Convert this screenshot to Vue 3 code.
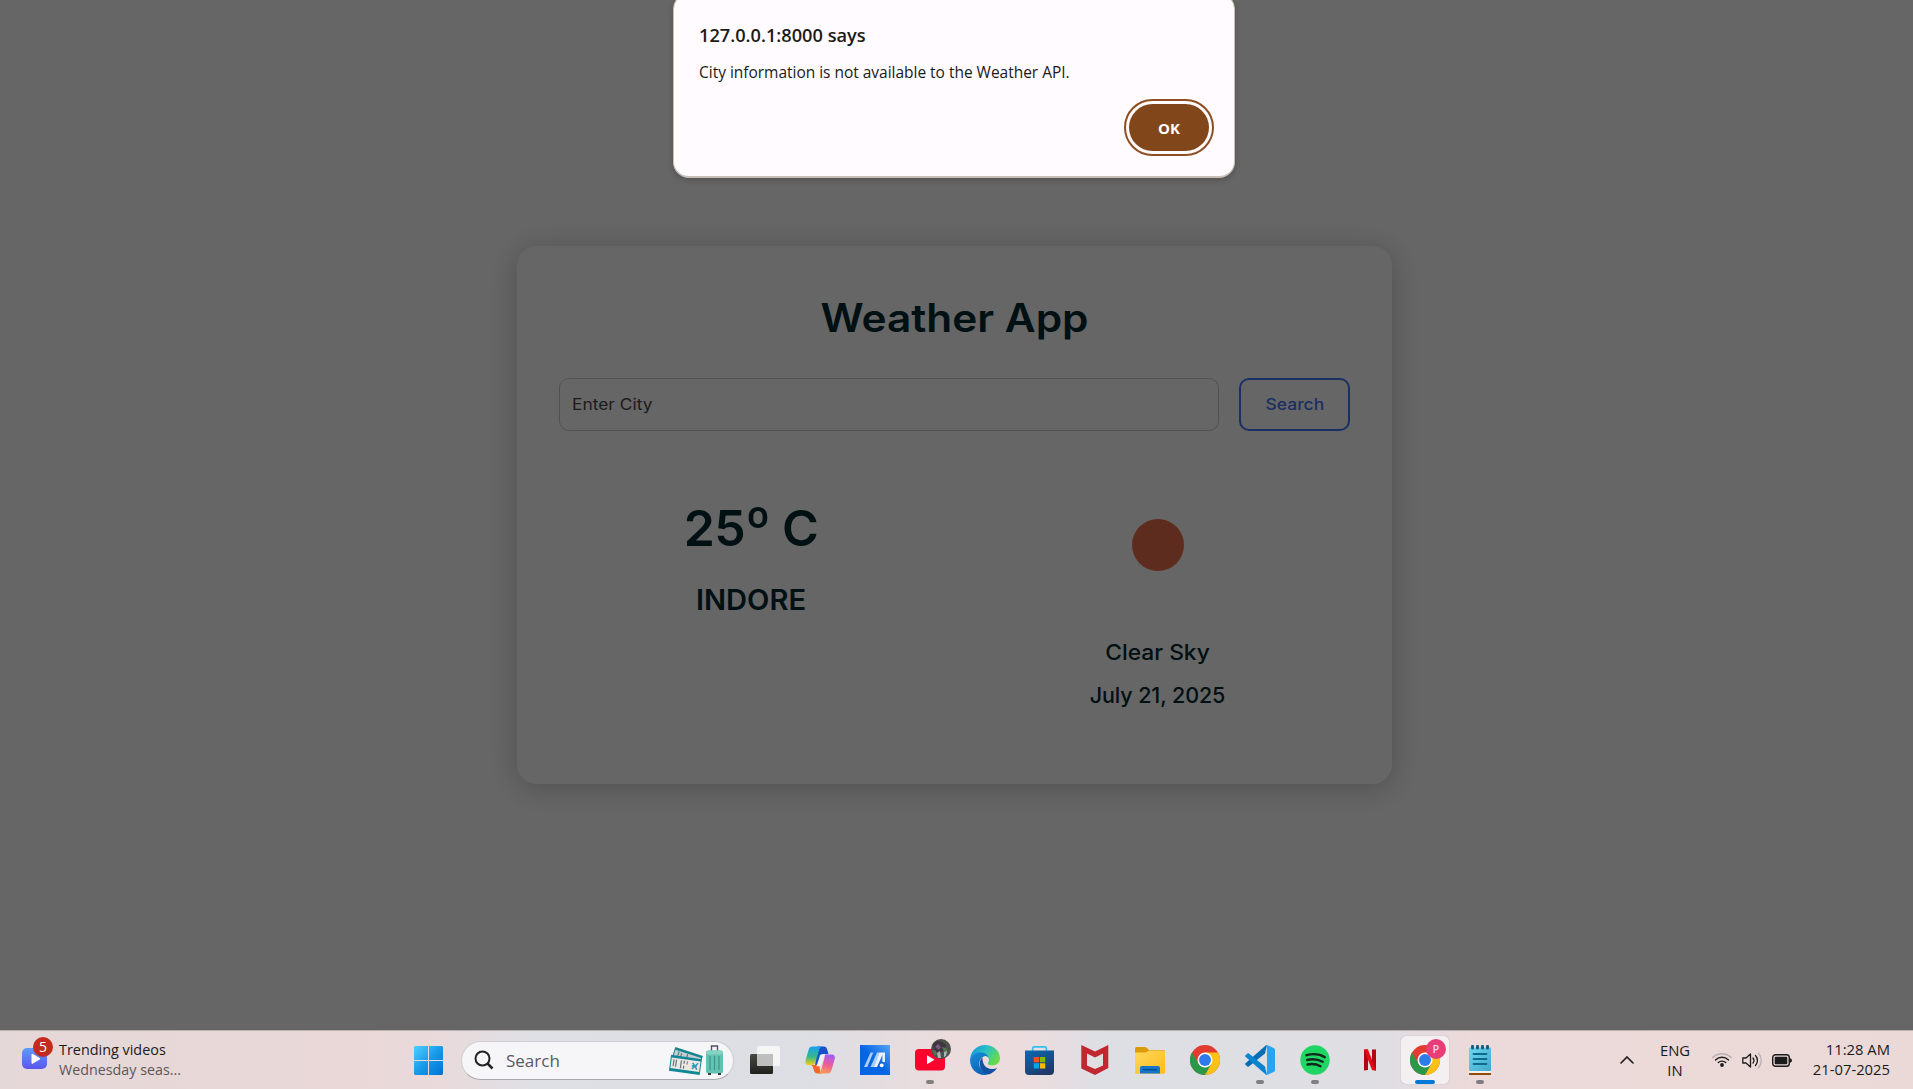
<script setup>
</script>

<template>
  <div class="screen">
    <main class="page">
      <section class="card">
        <h1 class="title">Weather App</h1>
        <form class="search-row" @submit.prevent>
          <div class="city-input"><span class="placeholder">Enter City</span></div>
          <button class="search-btn"><span class="search-label">Search</span></button>
        </form>
        <div class="result">
          <div class="col">
            <div class="temp">25<span class="degree">º</span> C</div>
            <div class="city">INDORE</div>
          </div>
          <div class="col">
            <div class="sun"></div>
            <div class="info sky">Clear Sky</div>
            <div class="info">July 21, 2025</div>
          </div>
        </div>
      </section>
    </main>
    <div class="shade"></div>
    <div class="dialog">
      <div class="dlg-title">127.0.0.1:8000 says</div>
      <div class="dlg-text">City information is not available to the Weather API.</div>
      <button class="ok">OK</button>
    </div>

    <footer class="taskbar">
      <div class="widgets">
        <svg class="video-icon" width="34" height="34" viewBox="0 0 34 34">
          <defs><linearGradient id="gv" x1="0" y1="0" x2="0" y2="1"><stop offset="0" stop-color="#5f9bf8" /><stop offset="1" stop-color="#5b57ee" /></linearGradient></defs>
          <rect x="1" y="11" width="25" height="21" rx="5" fill="url(#gv)" />
          <path d="M11 17v9.500l8-4.700z" fill="#fff" stroke="#fff" stroke-linejoin="round" />
          <circle cx="22" cy="10" r="10" fill="#c42b1c" />
          <text x="22" y="15" text-anchor="middle" class="badge-text">5</text>
        </svg>
        <div class="widget-text">
          <div class="w1">Trending videos</div>
          <div class="w2">Wednesday seas...</div>
        </div>
      </div>

      <div class="tile start">
        <svg width="29" height="29" viewBox="0 0 29 29">
          <defs><linearGradient id="gw" x1="0" y1="0" x2="1" y2="1"><stop offset="0" stop-color="#4cd0fd" /><stop offset=".5" stop-color="#179be9" /><stop offset="1" stop-color="#0071d2" /></linearGradient></defs>
          <path d="M1 0h13v14H0V1zM15 0h13l1 1v13H15zM0 15h14v14H1l-1-1zM15 15h14v13l-1 1H15z" fill="url(#gw)" />
        </svg>
      </div>

      <div class="pill">
        <svg class="mag" width="20" height="20" viewBox="0 0 20 20" fill="none" stroke="#222" stroke-width="2"><circle cx="8.500" cy="8.500" r="7" /><path d="M13.500 13.500l5 5" stroke-width="2.500" /></svg>
        <span class="pill-text">Search</span>
        <svg class="travel" width="54" height="32" viewBox="0 0 54 32">
          <g transform="rotate(18 6 4)"><rect x="6" y="3" width="29" height="13" fill="#16848f" /><rect x="7" y="5.500" width="27" height="8" fill="#c5cfd3" /><path d="M11 6v7M14 7v5M20 6v7" stroke="#4c6b75" /></g>
          <g transform="rotate(8 3 12)"><rect x="2" y="11" width="31" height="16" fill="#0f8794" /><rect x="3" y="13.500" width="29" height="10.500" fill="#ece7e2" /><path d="M5.500 15v7M8 15v7M13 15v8M16 15v3M16 20v3" stroke="#65737c" stroke-width="1.200" /><path d="M19 15v3.500" stroke="#777" /><path d="M24.500 16l5 6M30 15.500l-5.500 6.500M24 19h5" stroke="#299cb8" stroke-width="1.600" /></g>
          <path d="M42.500 7V2h6V7" fill="none" stroke="#4e5260" stroke-width="1.400" />
          <rect x="37" y="6.500" width="17" height="23" rx="2.500" fill="#66c2b0" />
          <rect x="37" y="6.500" width="17" height="4" rx="2" fill="#84d4c4" />
          <path d="M41 12v14M45.500 12v14M50 12v14" stroke="#3d988b" stroke-width="1.200" />
          <path d="M39 30h3M49 30h3" stroke="#35424b" stroke-width="2" />
        </svg>
      </div>

      <div class="tile">
        <svg width="30" height="30" viewBox="0 0 30 30">
          <defs><linearGradient id="gt" x1="0" y1="0" x2="0" y2="1"><stop offset="0" stop-color="#484845" /><stop offset="1" stop-color="#20201e" /></linearGradient></defs>
          <rect x="0" y="9" width="23" height="20" rx="1.500" fill="url(#gt)" />
          <rect x="7" y="1" width="23" height="20" rx="1.500" fill="#f5f5f5" opacity=".95" />
          <path d="M7 9h16v12H8.500L7 20z" fill="#bebebe" />
        </svg>
      </div>
      <div class="tile">
        <svg width="30" height="30" viewBox="0 0 30 30">
          <defs>
            <linearGradient id="gc1" x1="0" y1="0" x2="0" y2="1"><stop offset="0" stop-color="#1aa0f4" /><stop offset=".55" stop-color="#35b98a" /><stop offset="1" stop-color="#f2cf13" /></linearGradient>
            <linearGradient id="gc2" x1=".6" y1="0" x2=".3" y2="1"><stop offset="0" stop-color="#a35bf3" /><stop offset=".5" stop-color="#ee5c98" /><stop offset="1" stop-color="#fda04f" /></linearGradient>
          </defs>
          <path d="M12 1.500h7c1.500 0 2.500 1 3 2.500L23.500 9H19c-2 0-3 1-3.500 3L13 23c-.5 2-1.500 3-3.500 3z" fill="#1651c9" />
          <path d="M7.500 1.500h10c-2 0-3 2-3.600 4L10.500 17c-.7 2-1.500 3-3.500 3H3C.7 20 0 18 .6 15.600L3.500 5C4.200 2.600 5.400 1.500 7.500 1.500z" fill="url(#gc1)" />
          <path d="M7 20h3c2 0 3-1 3.500-3l1.500 8c.6 2 1.200 3.500 3 3.500h-5.500c-2 0-3-1-3.500-3L8 22.500C7.700 21 7 20 5.500 20z" fill="#f4662c" />
          <path d="M19.500 9.500H27c2.300 0 3.300 2 2.700 4.500l-3 10.500c-.8 2.500-2 4-4.200 4H12.500c2 0 3-1.500 3.600-3.500L19.500 13c.4-1.700 0-3 0-3.500z" fill="url(#gc2)" />
          <path d="M15 10.500c.6-1 1.500-1.200 3-1.200h2L16 20c-.5 1-1.500 1.200-3 1.200h-1.500z" fill="#eef0f4" />
        </svg>
      </div>
      <div class="tile">
        <svg width="30" height="30" viewBox="0 0 30 30">
          <defs><linearGradient id="gm" x1="0" y1="1" x2="1" y2="0"><stop offset=".5" stop-color="#0566e3" /><stop offset="1" stop-color="#58a4f6" /></linearGradient></defs>
          <rect width="30" height="30" fill="url(#gm)" />
          <path d="M4 22L10.500 7.500h2.800L7.300 22zM10.500 22L17 7.500h2.800L13.800 22z" fill="#a9cdf8" />
          <path d="M19.500 7.500H25V17h-2.600v-7L17 22h-3.200z" fill="#e8f2ff" /><circle cx="21.700" cy="20.300" r="1.900" fill="#fff" />
        </svg>
      </div>
      <div class="tile running">
        <svg class="wide" width="36" height="36" viewBox="0 0 36 36">
          <rect y="10" width="30" height="21.500" rx="4" fill="#f9052e" />
          <path d="M12 16.200v9l7.500-4.500z" fill="#fff" />
          <circle cx="26" cy="10" r="10" fill="#4b514b" />
          <path d="M18 5l4-3 5 1 4 3-1 5-5 3-5-2-2-4z" fill="#403343" /><path d="M20 8l3-3 3 3-2 3z" fill="#785a79" />
          <path d="M17 12l3-1 2 4-2 2zM27 8l4 1 2 4-3 3z" fill="#587350" /><path d="M22 14l3-2 1 7h-3zM29 13l3-1-1 5-2 1z" fill="#a9b4b8" />
        </svg>
      </div>
      <div class="tile">
        <svg width="30" height="30" viewBox="0 0 30 30">
          <defs>
            <linearGradient id="ge1" x1="0" y1="0" x2="1" y2=".5"><stop offset="0" stop-color="#168bd8" /><stop offset=".5" stop-color="#27bfc9" /><stop offset="1" stop-color="#66dc4c" /></linearGradient>
            <linearGradient id="ge2" x1="0" y1="0" x2=".5" y2="1"><stop offset="0" stop-color="#178edc" /><stop offset="1" stop-color="#0b62b4" /></linearGradient>
          </defs>
          <path d="M.2 13C1.200 5.500 7.500 0 15 0c8.500 0 15 6 15 13 0 4.500-3.500 7.500-7.500 7.500-3 0-4.700-1-4.700-2 0-.8 1.200-1.300 1.200-3.500 0-3-3-5-6.500-5C6.500 8 2 9.500.2 13z" fill="url(#ge1)" />
          <path d="M0 15C.5 9.500 5.500 7.500 10 7.500c4.500 0 8 2 8.800 5.500-1-1.500-2.700-2.200-4.300-1.800C9.500 12.500 7.500 19 11 23.500c1.500 2.500 4 4 7 5.500-1 .6-2.500 1-3.500 1C6.500 30 0 23.500 0 15z" fill="url(#ge2)" />
          <path d="M12.500 12.200C8 16 9 24 15 28c1 .6 2 1 3.500 1.500 3.500-1 6.500-3.500 8.500-6.500-1.500.8-3.500 1.200-5.500 1-5-.5-9.500-4-9-11.800z" fill="#1451a0" />
        </svg>
      </div>
      <div class="tile">
        <svg width="30" height="30" viewBox="0 0 30 30">
          <defs><linearGradient id="gs" x1="0" y1="0" x2=".6" y2="1"><stop offset="0" stop-color="#0f68b4" /><stop offset="1" stop-color="#203a68" /></linearGradient></defs>
          <path d="M7.700 7V3.200q0-1.400 1.400-1.400h10.800q1.400 0 1.400 1.400V7" fill="none" stroke="#35bff0" stroke-width="1.700" />
          <path d="M0 5.500h29V26q0 4-4 4H4q-4 0-4-4z" fill="url(#gs)" />
          <path d="M8.700 12H14v5.300H8.700z" fill="#f25022" /><path d="M14.900 12h5.300v5.300h-5.300z" fill="#7fba00" /><path d="M8.700 18.200H14v5.300H8.700z" fill="#00a4ef" /><path d="M14.900 18.200h5.300v5.300h-5.300z" fill="#ffb900" />
        </svg>
      </div>
      <div class="tile">
        <svg width="30" height="30" viewBox="0 0 30 30">
          <path d="M1.300 0L15 6.500 28.300 0v23L15 30 1.300 23.500z" fill="#c1272f" />
          <path d="M7 8.500l8 4 8-4V20.500L15 24l-8-3.500z" fill="#e2dfe2" />
        </svg>
      </div>
      <div class="tile">
        <svg width="30" height="30" viewBox="0 0 30 30">
          <defs><linearGradient id="gf" x1="0" y1="0" x2="1" y2="1"><stop offset="0" stop-color="#ffd75e" /><stop offset="1" stop-color="#fcbd1c" /></linearGradient></defs>
          <path d="M0 9V3.500Q0 2 1.500 2H10q1 0 2 1l2 2h14.500Q30 5 30 6.500V9z" fill="#dc9b08" />
          <path d="M0 7.500h10.500q1 0 2-1l1.500-1h14.500Q30 5.500 30 7v21q0 .8-.8.800H.8Q0 28.800 0 28z" fill="url(#gf)" />
          <path d="M5 28.500V23q0-2 2-2h16q2 0 2 2v5.500z" fill="#1275cc" /><path d="M8 24.700h14" stroke="#07467e" stroke-width="1.300" />
        </svg>
      </div>
      <div class="tile">
        <svg width="30" height="30" viewBox="0 0 30 30">
          <circle cx="15" cy="15" r="15" fill="#e23b30" />
          <path d="M2 7.500A15 15 0 0 0 15 30l6.500-11.300-13 0z" fill="#2a9849" />
          <path d="M28 7.500H15l6.500 11.250L15 30A15 15 0 0 0 28 7.500z" fill="#fbc116" />
          <circle cx="15" cy="15" r="7.500" fill="#fff" /><circle cx="15" cy="15" r="6" fill="#2c7be9" />
        </svg>
      </div>
      <div class="tile running">
        <svg width="30" height="30" viewBox="0 0 30 30">
          <path d="M22 0l-2 8.500L3.800 21.500q-.7.500-1.400 0L.5 19.800q-.8-.8 0-1.600L20.700.5q.6-.5 1.300-.5z" fill="#0a6cb5" />
          <path d="M22 30l-2-8.500L3.800 8.500q-.7-.5-1.400 0L.5 10.200q-.8.800 0 1.600L20.700 29.500q.6.500 1.300.500z" fill="#0a84d0" />
          <path d="M22 0l7 3.200q1 .5 1 1.600v20.400q0 1.100-1 1.600L22 30z" fill="#2aa4f0" />
        </svg>
      </div>
      <div class="tile running">
        <svg width="30" height="30" viewBox="0 0 30 30">
          <circle cx="15" cy="15" r="14.700" fill="#1fd662" />
          <path d="M6.500 10.200c6-1.600 13.500-1 18.300 2M7 15c5.500-1.300 11-.7 15.700 1.800M7.500 19.500c4.800-1 9-.5 13 1.700" fill="none" stroke="#14271c" stroke-width="2.400" stroke-linecap="round" />
        </svg>
      </div>
      <div class="tile">
        <svg width="30" height="30" viewBox="0 0 30 30">
          <path d="M9 4.500h4V25l-4 .5zM17 4.500h4v21l-4-.5z" fill="#b1060f" /><path d="M9 4.500h4l8 21-4-.5z" fill="#e50914" />
        </svg>
      </div>
      <div class="tile active">
        <svg class="wide" width="36" height="36" viewBox="0 0 36 36">
          <g transform="translate(0 6)">
            <circle cx="15" cy="15" r="15" fill="#e23b30" />
            <path d="M2 7.500A15 15 0 0 0 15 30l6.500-11.300-13 0z" fill="#2a9849" />
            <path d="M28 7.500H15l6.500 11.250L15 30A15 15 0 0 0 28 7.500z" fill="#fbc116" />
            <circle cx="15" cy="15" r="7.500" fill="#fff" /><circle cx="15" cy="15" r="6" fill="#2c7be9" />
          </g>
          <circle cx="26" cy="10" r="10" fill="#e93d78" />
          <text x="26" y="14" text-anchor="middle" class="profile-text">P</text>
        </svg>
      </div>
      <div class="tile running">
        <svg width="30" height="30" viewBox="0 0 30 30">
          <defs><linearGradient id="gn" x1="0" y1="0" x2="1" y2="1"><stop offset="0" stop-color="#6fd6ef" /><stop offset="1" stop-color="#3fa9cb" /></linearGradient></defs>
          <rect x="4" y="24" width="22" height="6" rx=".8" fill="#914a08" /><rect x="4" y="24" width="22" height="4" fill="#f4f1ee" />
          <rect x="4" y="2.500" width="22" height="23.500" rx="1" fill="url(#gn)" />
          <path d="M8.500 9h13M8.500 14h13M8.500 19h13" stroke="#0c6a8c" stroke-width="1.800" stroke-linecap="round" />
          <path d="M7.500 1.200v2M12.500 1.200v2M17.500 1.200v2M22.500 1.200v2" stroke="#0d5a78" stroke-width="2.800" stroke-linecap="round" />
        </svg>
      </div>

      <div class="tray">
        <svg class="chev" width="14" height="8" viewBox="0 0 14 8" fill="none" stroke="#1b1b1b" stroke-width="1.600" stroke-linecap="round"><path d="M1 7l6-6 6 6" /></svg>
        <div class="lang"><div>ENG</div><div>IN</div></div>
        <svg class="wifi" width="20" height="16" viewBox="0 0 20 16" fill="none" stroke-width="1.400" stroke-linecap="round">
          <path d="M.8 5.500a13 13 0 0 1 18.400 0" stroke="#b9aeb0" />
          <path d="M3.500 8a9.200 9.200 0 0 1 13 0M6.300 10.600a5.300 5.300 0 0 1 7.400 0" stroke="#1b1b1b" /><circle cx="10" cy="13" r="1.900" fill="#1b1b1b" />
        </svg>
        <svg class="vol" width="21" height="17" viewBox="0 0 21 17" fill="none" stroke="#1b1b1b" stroke-width="1.300" stroke-linecap="round" stroke-linejoin="round">
          <path d="M.8 6v5h3.200l4.500 4V2L4 6z" /><path d="M11 6a4 4 0 0 1 0 5M13.500 3.500a7.500 7.500 0 0 1 0 10" /><path d="M16.500 1.200a11 11 0 0 1 0 14.600" stroke="#b9aeb0" />
        </svg>
        <svg class="bat" width="20" height="13" viewBox="0 0 20 13"><rect x=".7" y=".7" width="16.600" height="11.600" rx="2.800" fill="none" stroke="#1b1b1b" stroke-width="1.400" /><rect x="2.700" y="2.700" width="12.600" height="7.600" rx="1" fill="#1b1b1b" /><path d="M18 4.200q2 .3 2 2.300t-2 2.300z" fill="#1b1b1b" /></svg>
        <div class="clock"><div>11:28 AM</div><div>21-07-2025</div></div>
      </div>
    </footer>
  </div>
</template>

<style>
body { margin: 0; }
</style>

<style scoped>
.screen { position: relative; display: flex; flex-direction: column; width: 1913px; height: 1089px; overflow: hidden; background: #fff; }
.page { flex: 1; font-family: Inter, "Open Sans", sans-serif; color: #002831; }
.shade { position: absolute; left: 0; top: 0; width: 1913px; height: 1030px; background: rgba(0, 0, 0, .6); }
.card { box-sizing: border-box; width: 875px; height: 538px; margin: 246px 0 0 517px; padding: 42px; border-radius: 20px; background: #fff; box-shadow: 0 4px 30px rgba(0, 0, 0, .22); }
.title { margin: 0; height: 60px; font-size: 39px; line-height: 60px; font-weight: 600; text-align: center; transform: scaleX(1.086); }
.search-row { display: flex; gap: 20px; margin-top: 30px; }
.city-input { box-sizing: border-box; width: 660px; height: 53px; padding-left: 11.500px; border: 1px solid #c8c8c8; border-radius: 10px; font-size: 16px; line-height: 51px; color: #484848; }
.placeholder { display: inline-block; transform: scaleX(1.085); transform-origin: 0 50%; }
.search-btn { box-sizing: border-box; width: 111px; height: 53px; padding: 0 0 2px; border: 2px solid #4575f8; border-radius: 10px; background: none; color: #4575f8; font: 500 16px Inter, sans-serif; }
.search-label { display: inline-block; transform: scaleX(1.09); }
.result { display: flex; margin-top: 60px; }
.col { flex: none; width: 384px; text-align: center; }
.col + .col { width: 429px; }
.temp { height: 75px; font-size: 50px; line-height: 75px; font-weight: 600; letter-spacing: -.6px; }
.degree { font-size: 54px; line-height: 1; }
.city { height: 42px; margin-top: 13px; font-size: 28px; line-height: 42px; font-weight: 600; transform: scaleX(1.04); }
.sun { width: 52px; height: 52px; margin: 28px auto 65px; border-radius: 50%; background: #eb6e4b; }
.info { height: 33px; margin-bottom: 10px; font-size: 21.500px; line-height: 33px; font-weight: 500; letter-spacing: -.1px; }
.sky { letter-spacing: 0; transform: scaleX(1.06); }

.dialog { position: absolute; left: 673px; top: -7px; box-sizing: border-box; width: 562px; height: 185px; padding: 28px 22px 0 25px; border: 1px solid #c9bfb9; border-bottom-width: 2px; border-radius: 16px; background: #fffbff; box-shadow: 0 2px 6px rgba(0, 0, 0, .2); font-family: "Open Sans", "Noto Sans", sans-serif; color: #201a17; }
.dlg-title { height: 27px; font-size: 18.200px; line-height: 27px; font-weight: 600; }
.dlg-text { height: 24px; margin-top: 11px; font-size: 15.500px; line-height: 24px; letter-spacing: -.02px; }
.ok { display: block; width: 80px; height: 47px; margin: 20px 3px 0 auto; padding: 0; border: 0; border-radius: 24px; background: #82461b; outline: 2px solid #8f4e20; outline-offset: 3px; color: #fff; font: 700 15px "Open Sans", sans-serif; }

.taskbar { display: flex; align-items: center; box-sizing: border-box; height: 59px; border-top: 1px solid #b9b2b3; background: linear-gradient(90deg, #e5d8d8 0, #ead8d8 340px, #ead9da 430px, #dfe0e5 530px, #dddee3 820px, #ecdcdd 950px, #ecdcdd 1020px, #dedfe4 1100px, #dedee3 1380px, #ecd9d9 1470px, #ebd9d8 1913px); font-family: "Open Sans", "Noto Sans", sans-serif; color: #1b1b1b; }
.widgets { display: flex; flex: none; width: 404px; height: 58px; }
.video-icon { margin: 6px 0 0 21px; overflow: visible; }
.badge-text { font: 14px "Open Sans", sans-serif; fill: #fff; }
.profile-text { font: 600 11px "Open Sans", sans-serif; fill: #f9d5e2; }
.widget-text { margin: 9px 0 0 4px; font-size: 14.400px; line-height: 20px; }
.w2 { color: #5d5657; font-size: 14.300px; }
.tile { position: relative; display: flex; flex: none; align-items: center; justify-content: center; width: 48px; height: 48px; margin-left: 7px; border-radius: 5px; }
.start { width: 49px; margin-left: 0; }
.wide { margin: -6px -6px 0 0; }
.running::after, .active::after { content: ""; position: absolute; left: 20px; bottom: 0; width: 8px; height: 4px; border-radius: 2px; background: #827f80; }
.active { background: #f4eff0; box-shadow: 0 0 1px #999; }
.active::after { left: 14px; width: 20px; background: #0078d7; }
.pill { display: flex; flex: none; align-items: center; box-sizing: border-box; width: 273px; height: 39px; margin-left: 8px; border: 1px solid #cfcdd1; border-bottom-color: #aaa9ad; border-radius: 20px; background: #f6f6f8; }
.mag { margin-left: 12px; }
.pill-text { flex: 1; margin-left: 12px; font-size: 17px; color: #5a5a5c; }
.travel { margin-right: 10px; }
.tray { display: flex; align-items: center; height: 58px; margin-left: auto; padding-right: 23px; font-size: 14.800px; line-height: 20px; }
.lang { width: 40px; margin: -1px 0 0 21px; text-align: center; }
.wifi { margin-left: 17px; }
.vol { margin-left: 10px; }
.bat { margin-left: 9px; }
.clock { width: 80px; margin: -2px 0 0 18px; text-align: right; white-space: nowrap; }
</style>
